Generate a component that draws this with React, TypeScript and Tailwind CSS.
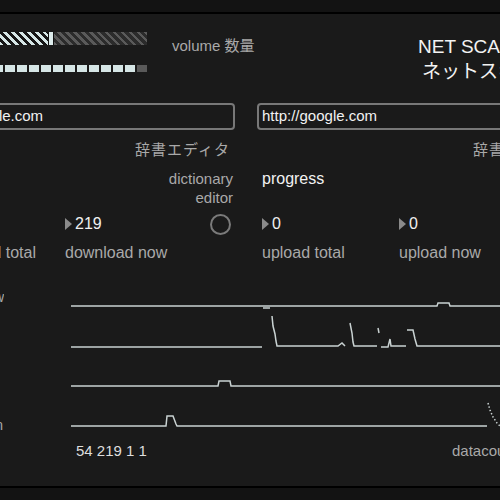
import React from 'react';

const font = "font-['Liberation_Sans','Noto_Sans_CJK_JP',sans-serif]";

function Slider() {
  return (
    <div className="flex h-[13px] w-[147px]">
      <div className="w-[48px] bg-[image:repeating-linear-gradient(45deg,#d6e6e6_0px,#d6e6e6_2.5px,#161616_2.5px,#161616_5.6px)]" />
      <div className="w-[6px] bg-[#dcebeb] border-x border-[#111]" />
      <div className="flex-1 bg-[image:repeating-linear-gradient(45deg,#5a5a5a_0px,#5a5a5a_2.5px,#2b2b2b_2.5px,#2b2b2b_5.6px)]" />
    </div>
  );
}

function Meter() {
  const segs = Array.from({ length: 11 });
  return (
    <div className="flex h-[7px] w-[148px] gap-[2px]">
      <div className="w-[3px] bg-[#d6e6e6]" />
      {segs.map((_, i) => (
        <div key={i} className="w-[10px] bg-[#d6e6e6]" />
      ))}
      <div className="w-[10px] bg-[#5a5a5a]" />
    </div>
  );
}

function NumberBox({ value }: { value: string }) {
  return (
    <div className="flex items-center">
      <svg width="7" height="12" viewBox="0 0 7 12" className="mr-[3px]">
        <polygon points="0,0 7,6 0,12" fill="#8a8a8a" />
      </svg>
      <span className="text-[16px] leading-[18px] text-[#f0f0f0]">{value}</span>
    </div>
  );
}

function Plots() {
  const line = '#c9d2d2';
  return (
    <svg width="429" height="150" viewBox="71 290 429 150" className="block shrink-0">
      <g stroke={line} strokeWidth="1.5" fill="none">
        {/* row 1 */}
        <path d="M71 306 H437 L438 303 H449 L450 306 H500" />
        {/* row 2 */}
        <path d="M71 347 H262" />
        <path d="M263 308 H270" />
        <path d="M272 316 L273 326 L275 334 L276 341 L277 346 H294 L295 346 H338 L342 343 L345 346" />
        <path d="M350 323 L352 333 L353 342 L354 346 H377" />
        <path d="M378 328 L379 333" />
        <path d="M381 347 H388 L390 339 L391 346 H406" />
        <path d="M407 330 H413 L415 339 L417 346 H500" />
        {/* row 3 */}
        <path d="M71 386 H218 L219 381 H230 L231 386 H500" />
        {/* row 4 */}
        <path d="M71 426 H166 L167 416 H173 L176 424 L177 426 H487" />
        <path d="M488 403 L490 410 L493 417 L497 423 L500 426" strokeDasharray="1.5 2" />
      </g>
    </svg>
  );
}

export default function App() {
  return (
    <div className={`w-[500px] h-[500px] overflow-hidden bg-[#1a1a1a] ${font}`}>
      <div className="h-[12px] bg-[#131313]" />
      <div className="h-[2px] bg-black" />

      {/* header row */}
      <div className="flex h-[89px]">
        <div className="w-[147px] shrink-0 pt-[18px] flex flex-col gap-[20px]">
          <Slider />
          <Meter />
        </div>
        <div className="w-[271px] shrink-0 pl-[25px] pt-[23px] text-[15px] leading-[17px] text-[#a9a9a9] whitespace-nowrap">
          volume 数量
        </div>
        <div className="shrink-0 pt-[22px] flex flex-col gap-[3px] text-[19px] leading-[22px] text-[#f2f2f2] whitespace-nowrap">
          <span>NET SCAN</span>
          <span className="pl-[4px]">ネットスキャン</span>
        </div>
      </div>

      {/* url boxes */}
      <div className="flex h-[27px] gap-[22px] text-[15px] text-[#f2f2f2]">
        <div className="ml-[-77px] w-[312px] shrink-0 border-2 border-[#787878] rounded-[4px] flex items-center pl-[3px] whitespace-nowrap">
          http://google.com
        </div>
        <div className="w-[300px] shrink-0 border-2 border-[#787878] rounded-[4px] flex items-center pl-[3px] whitespace-nowrap">
          http://google.com
        </div>
      </div>

      {/* dictionary row */}
      <div className="flex h-[78px]">
        <div className="w-[235px] shrink-0 pt-[11px] flex flex-col items-end">
          <span className="pr-[5px] text-[15px] leading-[18px] text-[#a9a9a9] tracking-[1px]">辞書エディタ</span>
          <div className="mt-[10px] pr-[2px] flex flex-col items-end text-[15px] leading-[19px] text-[#a9a9a9]">
            <span>dictionary</span>
            <span>editor</span>
          </div>
        </div>
        <div className="ml-[22px] shrink-0 pt-[11px] flex flex-col">
          <span className="pl-[216px] text-[15px] leading-[18px] text-[#a9a9a9] tracking-[1px] whitespace-nowrap">辞書エディタ</span>
          <span className="mt-[10px] pl-[5px] text-[16px] leading-[19px] text-[#f2f2f2]">progress</span>
        </div>
      </div>

      {/* number boxes */}
      <div className="flex h-[32px] items-center">
        <div className="w-[65px] shrink-0" />
        <div className="w-[145px] shrink-0">
          <NumberBox value="219" />
        </div>
        <div className="w-[52px] shrink-0">
          <div className="w-[21px] h-[21px] rounded-full border-2 border-[#7a7a7a]" />
        </div>
        <div className="w-[137px] shrink-0">
          <NumberBox value="0" />
        </div>
        <NumberBox value="0" />
      </div>

      {/* labels */}
      <div className="flex h-[26px] items-center text-[16px] leading-[18px] text-[#a9a9a9] whitespace-nowrap">
        <div className="w-[36px] shrink-0 overflow-hidden flex justify-end">
          <span className="shrink-0">download total</span>
        </div>
        <div className="w-[29px] shrink-0" />
        <div className="w-[197px] shrink-0">download now</div>
        <div className="w-[137px] shrink-0">upload total</div>
        <div className="shrink-0">upload now</div>
      </div>

      <div className="h-[24px]" />

      {/* plots */}
      <div className="flex h-[150px]">
        <div className="w-[71px] shrink-0 flex flex-col text-[14px] leading-[14px] text-[#a9a9a9]">
          <div className="w-[4px] overflow-hidden flex justify-end">
            <span className="shrink-0">now</span>
          </div>
          <div className="mt-[114px] w-[3px] overflow-hidden flex justify-end">
            <span className="shrink-0">down</span>
          </div>
        </div>
        <Plots />
      </div>

      {/* footer */}
      <div className="flex h-[20px] items-center text-[15px] leading-[17px] whitespace-nowrap">
        <div className="w-[452px] shrink-0 pl-[76px] text-[#dedede]">54 219 1 1</div>
        <div className="shrink-0 text-[#a9a9a9]">datacount</div>
      </div>

      <div className="h-[26px]" />
      <div className="h-[2px] bg-black" />
      <div className="h-[12px] bg-[#131313]" />
    </div>
  );
}
